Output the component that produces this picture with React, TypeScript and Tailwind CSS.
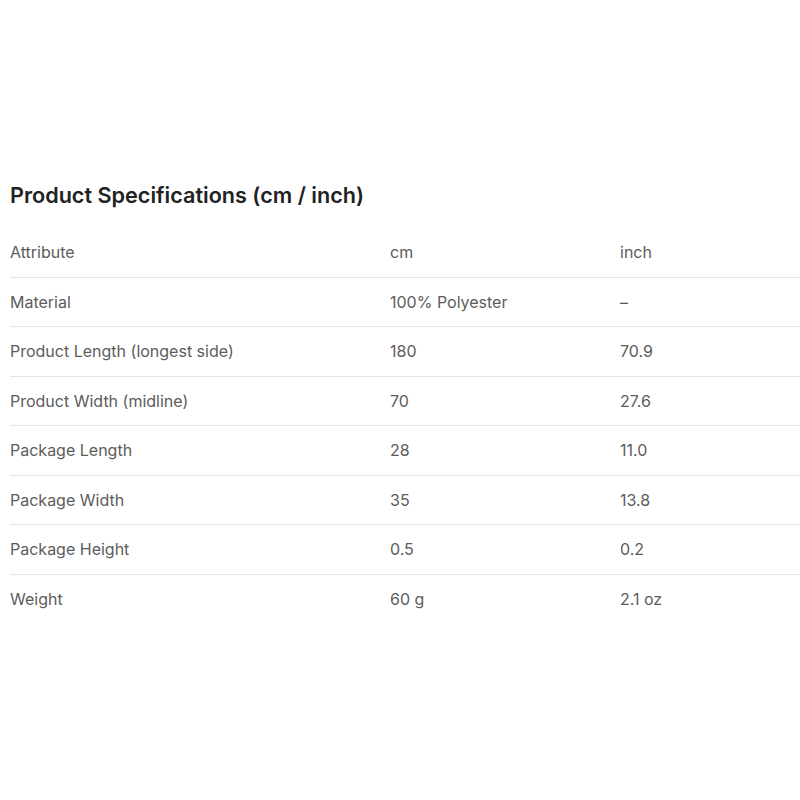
const rows: [string, string, string][] = [
  ['Material', '100% Polyester', '–'],
  ['Product Length (longest side)', '180', '70.9'],
  ['Product Width (midline)', '70', '27.6'],
  ['Package Length', '28', '11.0'],
  ['Package Width', '35', '13.8'],
  ['Package Height', '0.5', '0.2'],
  ['Weight', '60 g', '2.1 oz'],
];

export default function App() {
  return (
    <div className="min-h-[800px] bg-white pl-[10px] pt-[180px] font-['Inter',sans-serif]">
      <h2 className="text-[21.6px] font-semibold leading-[30px] text-[#222]">
        Product Specifications (cm / inch)
      </h2>
      <table className="mt-[17px] w-[790px] border-collapse text-left text-[16px] text-[#5c5c5c]">
        <thead>
          <tr className="h-[50px] border-b border-[#e5e5e5]">
            <th className="w-[380px] font-normal">Attribute</th>
            <th className="w-[230px] font-normal">cm</th>
            <th className="font-normal">inch</th>
          </tr>
        </thead>
        <tbody>
          {rows.map((r, i) => (
            <tr
              key={r[0]}
              className={
                i < rows.length - 1
                  ? 'h-[49.5px] border-b border-[#e5e5e5]'
                  : 'h-[49.5px]'
              }
            >
              <td>{r[0]}</td>
              <td>{r[1]}</td>
              <td>{r[2]}</td>
            </tr>
          ))}
        </tbody>
      </table>
    </div>
  );
}
